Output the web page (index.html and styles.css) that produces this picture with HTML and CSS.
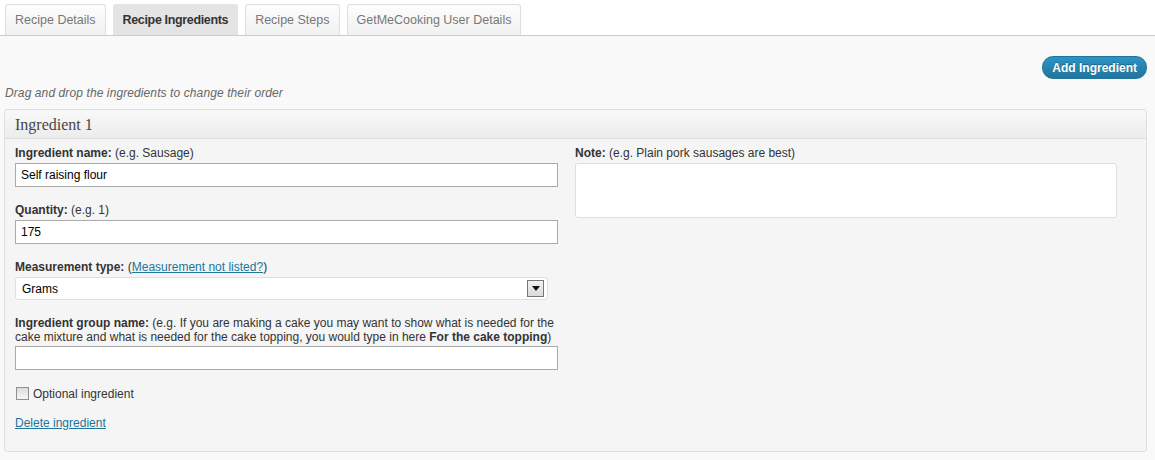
FILE: index.html
```html
<!DOCTYPE html>
<html>
<head>
<meta charset="utf-8">
<link rel="stylesheet" href="styles.css">
</head>
<body>
<div class="tabs">
  <div class="tab">Recipe Details</div>
  <div class="tab active">Recipe Ingredients</div>
  <div class="tab">Recipe Steps</div>
  <div class="tab">GetMeCooking User Details</div>
</div>
<div class="content">
  <div class="actions">
    <button class="btn-primary">Add Ingredient</button>
  </div>
  <p class="hint">Drag and drop the ingredients to change their order</p>
  <div class="panel">
    <div class="panel-head">Ingredient 1</div>
    <div class="panel-body">
      <div class="col">
        <div class="field">
          <label class="lbl"><b>Ingredient name:</b> (e.g. Sausage)</label>
          <input class="txt" type="text" value="Self raising flour">
        </div>
        <div class="field">
          <label class="lbl"><b>Quantity:</b> (e.g. 1)</label>
          <input class="txt" type="text" value="175">
        </div>
        <div class="field">
          <label class="lbl"><b>Measurement type:</b> (<a href="#" class="link">Measurement not listed?</a>)</label>
          <div class="select">
            <span class="select-val">Grams</span>
            <span class="select-arrow"><svg width="8" height="5" viewBox="0 0 8 5"><path d="M0 0H8L4 5Z" fill="#111"/></svg></span>
          </div>
        </div>
        <div class="field">
          <label class="lbl lbl-wrap">
            <span class="line"><b>Ingredient group name:</b> (e.g. If you are making a cake you may want to show what is needed for the</span>
            <span class="line">cake mixture and what is needed for the cake topping, you would type in here <b>For the cake topping</b>)</span>
          </label>
          <input class="txt" type="text" value="">
        </div>
        <div class="check-row">
          <input type="checkbox" class="chk">
          <span>Optional ingredient</span>
        </div>
        <a href="#" class="link delete">Delete ingredient</a>
      </div>
      <div class="col">
        <div class="field">
          <label class="lbl"><b>Note:</b> (e.g. Plain pork sausages are best)</label>
          <textarea class="area"></textarea>
        </div>
      </div>
    </div>
  </div>
</div>
</body>
</html>
```
FILE: styles.css
```css
html, body {
  margin: 0;
  padding: 0;
}
body {
  width: 1155px;
  height: 460px;
  font-family: "Liberation Sans", Arial, sans-serif;
  font-size: 12px;
  color: #333;
  background: #f9f9f9;
  overflow: hidden;
}
.tabs {
  display: flex;
  gap: 7px;
  padding: 4px 0 0 5px;
  background: #fff;
  border-bottom: 1px solid #ccc;
}
.tab {
  height: 30px;
  line-height: 30px;
  padding: 0 9px;
  font-size: 12.5px;
  color: #777;
  border: 1px solid #dfdfdf;
  border-bottom: none;
  border-radius: 3px 3px 0 0;
  background: linear-gradient(#fdfdfd, #f1f1f1);
}
.tab.active {
  color: #333;
  font-weight: bold;
  letter-spacing: -0.35px;
  background: #e4e4e4;
  border-color: #e4e4e4;
}
.content {
  padding: 20px 8px 0 4px;
}
.actions {
  display: flex;
  justify-content: flex-end;
}
.btn-primary {
  height: 23px;
  padding: 0 9px;
  border: 1px solid #21759b;
  border-radius: 11px;
  background: linear-gradient(#2a95c5, #21759b);
  color: #fff;
  font-family: "Liberation Sans", Arial, sans-serif;
  font-size: 12px;
  font-weight: bold;
  text-shadow: 0 -1px 0 rgba(0,0,0,0.3);
}
.hint {
  margin: 7px 0 0 1px;
  line-height: 15px;
  font-style: italic;
  letter-spacing: 0.1px;
  color: #666;
}
.panel {
  margin-top: 8px;
  border: 1px solid #dfdfdf;
  border-radius: 3px;
  background: #f5f5f5;
}
.panel-head {
  height: 28px;
  line-height: 29px;
  padding-left: 10px;
  font-family: "Liberation Serif", Georgia, serif;
  font-size: 16px;
  color: #464646;
  background: linear-gradient(#f9f9f9, #ececec);
  border-bottom: 1px solid #dfdfdf;
  border-radius: 3px 3px 0 0;
}
.panel-body {
  display: grid;
  grid-template-columns: 543px 542px;
  gap: 17px;
  padding: 7px 30px 21px 10px;
}
.col {
  display: flex;
  flex-direction: column;
}
.field {
  display: flex;
  flex-direction: column;
  margin-bottom: 16px;
}
.lbl {
  display: block;
  line-height: 14px;
  margin-bottom: 3px;
  color: #333;
}
.lbl-wrap {
  margin-bottom: 2px;
}
.line {
  display: block;
  white-space: nowrap;
}
.txt {
  box-sizing: border-box;
  height: 24px;
  width: 543px;
  margin: 0;
  padding: 0 5px;
  border: 1px solid #aaa;
  background: #fff;
  font-family: "Liberation Sans", Arial, sans-serif;
  font-size: 12px;
  color: #000;
}
.select {
  position: relative;
  box-sizing: border-box;
  width: 533px;
  height: 23px;
  border: 1px solid #dfdfdf;
  border-radius: 3px;
  background: #fff;
  display: flex;
  align-items: center;
  padding-left: 6px;
  color: #000;
}
.select-arrow {
  position: absolute;
  right: 3px;
  top: 2px;
  box-sizing: border-box;
  width: 17px;
  height: 17px;
  border: 1px solid #777;
  background: linear-gradient(#f2f2f2, #dadada);
  display: flex;
  align-items: center;
  justify-content: center;
}
.link {
  color: #21759b;
  text-decoration: underline;
}
.check-row {
  display: flex;
  align-items: center;
  gap: 4px;
  margin-top: 1px;
  height: 13px;
  color: #333;
}
.chk {
  appearance: none;
  -webkit-appearance: none;
  margin: 0 0 0 1px;
  width: 13px;
  height: 13px;
  border: 1px solid #8f8f8f;
  background: linear-gradient(#dcdcdc, #f6f6f6);
  box-sizing: border-box;
}
.delete {
  margin-top: 16px;
  line-height: 14px;
  align-self: flex-start;
}
.area {
  box-sizing: border-box;
  width: 542px;
  height: 55px;
  margin: 0;
  border: 1px solid #dfdfdf;
  border-radius: 3px;
  background: #fff;
  resize: none;
}
```
